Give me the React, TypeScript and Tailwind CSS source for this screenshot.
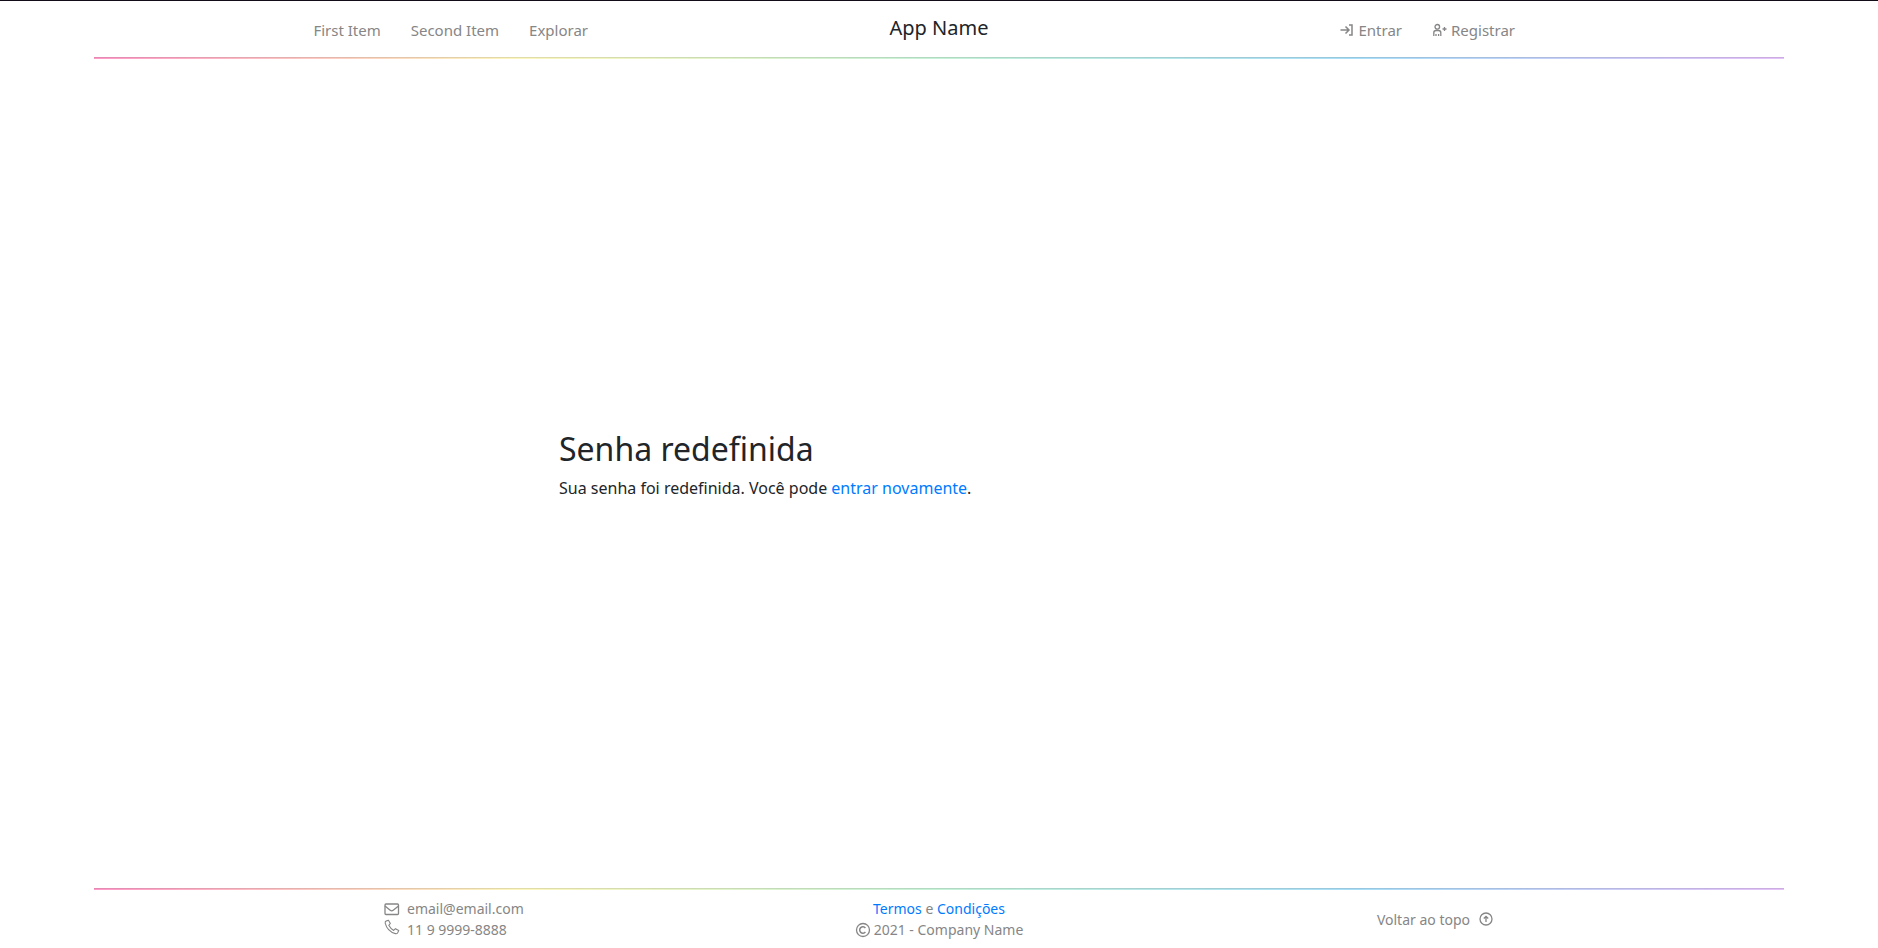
import type { ReactNode } from "react";

function Rule() {
  return (
    <hr className="mx-auto h-[2px] w-[90%] border-0 border-t border-black/10 bg-[linear-gradient(to_right,#ff99c8,#fcf6bd,#c6f2d8,#a9def9,#e4c1f9)] bg-origin-border" />
  );
}

function Icon({ children }: { children: ReactNode }) {
  return (
    <svg viewBox="0 0 16 16" fill="none" stroke="currentColor" strokeWidth="1.3" className="size-4 shrink-0" aria-hidden="true">
      {children}
    </svg>
  );
}

function NavLink({ children }: { children: ReactNode }) {
  return (
    <a href="#" className="flex items-center gap-[3px] px-[15px] text-[15px] leading-6 whitespace-nowrap text-[#868686]">
      {children}
    </a>
  );
}

export default function App() {
  return (
    <div id="top" className="flex min-h-screen flex-col border-t border-[#120b18] bg-white font-['Noto_Sans',sans-serif] text-[#212529]">
      <header>
        <nav className="mx-auto grid h-14 w-[78%] grid-cols-3 items-center">
          <div className="flex justify-center pt-[2px]">
            <NavLink>First Item</NavLink>
            <NavLink>Second Item</NavLink>
            <NavLink>Explorar</NavLink>
          </div>
          <a href="#" className="justify-self-center pb-[2px] text-[20px] leading-8 whitespace-nowrap text-[#212529]">App Name</a>
          <div className="flex justify-center pt-[2px]">
            <NavLink>
              <Icon>
                <path d="M1.500 8h8M6.500 4.500l3.500 3.500L6.500 11.500M10 3h3v10h-3" strokeWidth="1.500" />
              </Icon>
              Entrar
            </NavLink>
            <NavLink>
              <Icon>
                <path d="M1.800 14v-3.300c0-1.400.8-2.200 2.200-2.200h2.600c1.400 0 2.200.8 2.200 2.200V14M4 14v-2M6.600 14v-2M12.500 5v4M10.500 7h4" />
                <circle cx="5.300" cy="4.800" r="2.300" />
              </Icon>
              Registrar
            </NavLink>
          </div>
        </nav>
        <Rule />
      </header>

      <main className="flex flex-1 flex-col justify-center">
        <section className="mx-auto w-full max-w-[760px] pb-[18px]">
          <h1 className="mb-2 text-[32px] leading-[38px]">Senha redefinida</h1>
          <p className="text-[16px] leading-6">
            Sua senha foi redefinida. Você pode <a href="#" className="text-[#007bff]">entrar novamente</a>.
          </p>
        </section>
      </main>

      <footer className="text-[14px] leading-[21px] text-[#868686]">
        <Rule />
        <div className="mx-auto grid h-[58px] max-w-[1140px] grid-cols-3 items-center px-[15px]">
          <div>
            <p className="flex items-center gap-[7px]">
              <Icon>
                <rect x="1" y="3" width="13.500" height="10.500" rx="1" />
                <path d="M1 5l5.200 4.300c1 .8 2 .8 3 0L14.500 5" />
              </Icon>
              email@email.com
            </p>
            <p className="flex items-start gap-[7px]">
              <Icon>
                <path d="M4.500 1.300 2.500 1.900C1.400 2.200 1 3.100 1.200 4.100c1.300 5.200 5.200 9.100 10.200 10.500 1 .3 2.100-.1 2.500-1.200l.8-2-3.300-1.700-1.700 1.700C7.700 10.300 5.900 8.500 4.800 6.300l1.500-1.800z" strokeWidth="1.100" />
              </Icon>
              11 9 9999-8888
            </p>
          </div>
          <div className="justify-self-center text-center">
            <p>
              <a href="#" className="text-[#007bff]">Termos</a> e <a href="#" className="text-[#007bff]">Condições</a>
            </p>
            <p className="flex items-center gap-[3px]">
              <Icon>
                <circle cx="8" cy="8" r="6.500" />
                <path d="M10.400 6A3.200 3.200 0 1 0 10.400 10" strokeWidth="1.500" />
              </Icon>
              2021 - Company Name
            </p>
          </div>
          <a href="#top" className="flex items-center gap-2 justify-self-end">
            Voltar ao topo
            <Icon>
              <circle cx="8" cy="8" r="6" />
              <path d="M8 11V5.500M5.800 7.500 8 5.300l2.200 2.200" />
            </Icon>
          </a>
        </div>
      </footer>
    </div>
  );
}
